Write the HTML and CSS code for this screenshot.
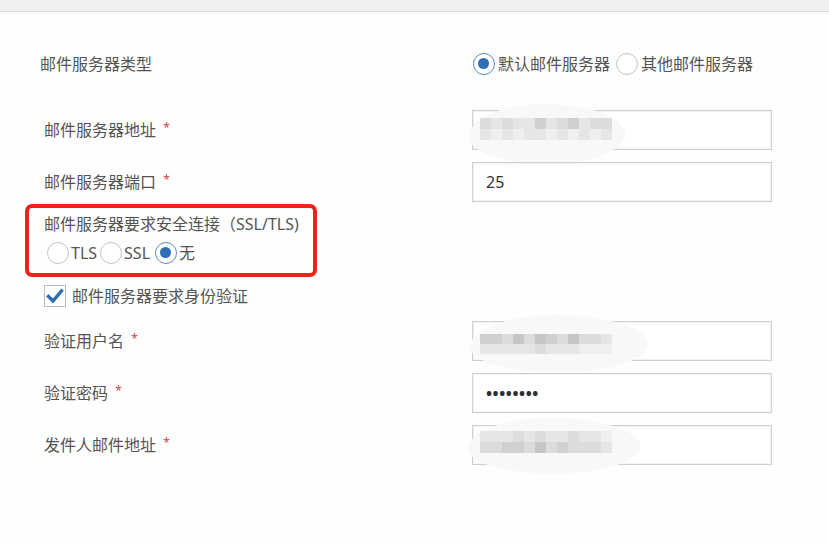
FILE: index.html
```html
<!DOCTYPE html>
<html lang="zh-CN">
<head>
<meta charset="utf-8">
<title>邮件服务器设置</title>
<link rel="stylesheet" href="styles.css">
</head>
<body>
<div class="topbar"></div>
<div class="form">
  <div class="row first">
    <div class="label">邮件服务器类型</div>
    <div class="radios">
      <span class="radio on"></span><span class="rtext">默认邮件服务器</span>
      <span class="radio gap"></span><span class="rtext">其他邮件服务器</span>
    </div>
  </div>

  <div class="row r2">
    <div class="label">邮件服务器地址 <span class="req">*</span></div>
    <div class="field">
      <div class="input"></div>
      <div class="blob b1">
        <div class="mosaic">
          <i class="c2"></i><i class="c1"></i><i class="c2"></i><i class="c1"></i><i class="c1"></i><i class="c3"></i><i class="c1"></i><i class="c2"></i><i class="c3"></i><i class="c1"></i><i class="c2"></i><i class="c2"></i>
          <i class="c1"></i><i class="c0"></i><i class="c1"></i><i class="c0"></i><i class="c1"></i><i class="c1"></i><i class="c0"></i><i class="c1"></i><i class="c0"></i><i class="c1"></i><i class="c0"></i><i class="c1"></i>
        </div>
      </div>
    </div>
  </div>

  <div class="row r3">
    <div class="label">邮件服务器端口 <span class="req">*</span></div>
    <div class="field"><div class="input">25</div></div>
  </div>

  <div class="secure">
    <div class="slabel">邮件服务器要求安全连接（SSL/TLS)</div>
    <div class="sradios">
      <span class="radio"></span><span class="rtext">TLS</span>
      <span class="radio g2"></span><span class="rtext">SSL</span>
      <span class="radio on g3"></span><span class="rtext">无</span>
    </div>
  </div>

  <div class="check">
    <span class="box"><svg width="18" height="18" viewBox="0 0 18 18"><path d="M2.5 9.5 L7 14 L15.5 4" fill="none" stroke="#2f6db5" stroke-width="3.4" stroke-linecap="square" stroke-linejoin="miter"/></svg></span>
    <span class="ctext">邮件服务器要求身份验证</span>
  </div>

  <div class="row r4">
    <div class="label">验证用户名 <span class="req">*</span></div>
    <div class="field">
      <div class="input"></div>
      <div class="blob b2">
        <div class="mosaic">
          <i class="c3"></i><i class="c3"></i><i class="c2"></i><i class="c4"></i><i class="c2"></i><i class="c4"></i><i class="c3"></i><i class="c2"></i><i class="c4"></i><i class="c2"></i><i class="c2"></i><i class="c1"></i>
          <i class="c1"></i><i class="c1"></i><i class="c1"></i><i class="c1"></i><i class="c1"></i><i class="c2"></i><i class="c1"></i><i class="c1"></i><i class="c1"></i><i class="c0"></i><i class="c0"></i><i class="c0"></i>
        </div>
      </div>
    </div>
  </div>

  <div class="row r5">
    <div class="label">验证密码 <span class="req">*</span></div>
    <div class="field"><div class="input pwd">••••••••</div></div>
  </div>

  <div class="row r5">
    <div class="label">发件人邮件地址 <span class="req">*</span></div>
    <div class="field">
      <div class="input"></div>
      <div class="blob b3">
        <div class="mosaic">
          <i class="c1"></i><i class="c1"></i><i class="c1"></i><i class="c2"></i><i class="c1"></i><i class="c2"></i><i class="c1"></i><i class="c1"></i><i class="c2"></i><i class="c1"></i><i class="c1"></i><i class="c0"></i>
          <i class="c2"></i><i class="c2"></i><i class="c3"></i><i class="c3"></i><i class="c2"></i><i class="c4"></i><i class="c2"></i><i class="c3"></i><i class="c2"></i><i class="c2"></i><i class="c2"></i><i class="c1"></i>
        </div>
      </div>
    </div>
  </div>
</div>
</body>
</html>
```

FILE: styles.css
```css
html, body {
  margin: 0;
  padding: 0;
  background: #fefefe;
}
body {
  font-family: "Noto Sans", "Noto Sans CJK SC", sans-serif;
  font-size: 16px;
  color: #545454;
  width: 829px;
  height: 543px;
  overflow: hidden;
}
.topbar {
  height: 11px;
  background: #f0f0f0;
  border-bottom: 1px solid #dcdcdc;
}
.form {
  display: flex;
  flex-direction: column;
  padding: 32px 0 0 44px;
}
.row {
  display: flex;
  align-items: center;
  height: 40px;
}
.label {
  width: 428px;
  line-height: 22px;
  white-space: nowrap;
  margin-bottom: 3px;
}
.first .label {
  margin-left: -4px;
  width: 432px;
  margin-bottom: 1px;
}
.r2 { margin-top: 26px; }
.r3 { margin-top: 12px; }
.r4 { margin-top: 14px; }
.r5 { margin-top: 12px; }
.req {
  color: #d0494a;
  font-size: 12px;
  vertical-align: 4px;
  margin-left: 3px;
}
.radios, .sradios {
  display: flex;
  align-items: center;
}
.radios { margin-left: 1px; }
.radio {
  box-sizing: border-box;
  width: 22px;
  height: 22px;
  border-radius: 50%;
  border: 1px solid #c4c4c4;
  background: #fff;
  position: relative;
  flex: none;
}
.radio.on {
  border: 1.5px solid #5a88c2;
}
.radio.on::after {
  content: "";
  position: absolute;
  left: 4px;
  top: 4px;
  width: 11px;
  height: 11px;
  border-radius: 50%;
  background: #2f6db5;
}
.rtext {
  margin-left: 3px;
  line-height: 22px;
  white-space: nowrap;
}
.radio.gap { margin-left: 6px; }
.field {
  position: relative;
  width: 300px;
  height: 40px;
}
.input {
  box-sizing: border-box;
  width: 300px;
  height: 40px;
  border: 1px solid #cfcfcf;
  box-shadow: inset 0 0 0 1px #f2f2f2;
  background: #fff;
  padding-left: 13px;
  line-height: 38px;
  color: #333;
  font-size: 16px;
}
.pwd {
  font-size: 16px;
  letter-spacing: 0.6px;
  color: #2e2e2e;
  font-weight: bold;
}
.blob {
  position: absolute;
  background: #f8f8f8;
  border-radius: 48% 52% 50% 50% / 55% 50% 50% 45%;
  padding: 0;
}
.b1 { left: -3px; top: -6px; width: 156px; height: 60px; }
.b2 { left: -2px; top: -6px; width: 178px; height: 58px; }
.b3 { left: -4px; top: -7px; width: 172px; height: 56px; }
.mosaic {
  position: absolute;
  display: grid;
  grid-template-columns: repeat(12, 11px);
  grid-auto-rows: 11px;
}
.b1 .mosaic { left: 11px; top: 14px; }
.b2 .mosaic { left: 10px; top: 19px; grid-auto-rows: 10px; }
.b3 .mosaic { left: 12px; top: 13px; }
.mosaic i { display: block; }
.c0 { background: #efefef; }
.c1 { background: #e6e6e6; }
.c2 { background: #dcdcdc; }
.c3 { background: #d0d0d0; }
.c4 { background: #c6c6c6; }
.secure {
  box-sizing: border-box;
  margin-top: 2px;
  margin-left: -19px;
  width: 292px;
  height: 73px;
  border: 4px solid #f2211c;
  border-radius: 7px;
  padding: 5px 0 0 15px;
}
.slabel {
  line-height: 22px;
  white-space: nowrap;
}
.sradios {
  margin-top: 7px;
  margin-left: 3px;
}
.sradios .rtext { margin-left: 2px; }
.radio.g2 { margin-left: 3px; }
.radio.g3 { margin-left: 5px; }
.check {
  display: flex;
  align-items: center;
  margin-top: 8px;
  height: 22px;
}
.box {
  box-sizing: border-box;
  width: 22px;
  height: 22px;
  border: 1px solid #bdbdbd;
  background: #fff;
  display: flex;
  align-items: center;
  justify-content: center;
}
.ctext {
  margin-left: 6px;
  line-height: 22px;
}
```
